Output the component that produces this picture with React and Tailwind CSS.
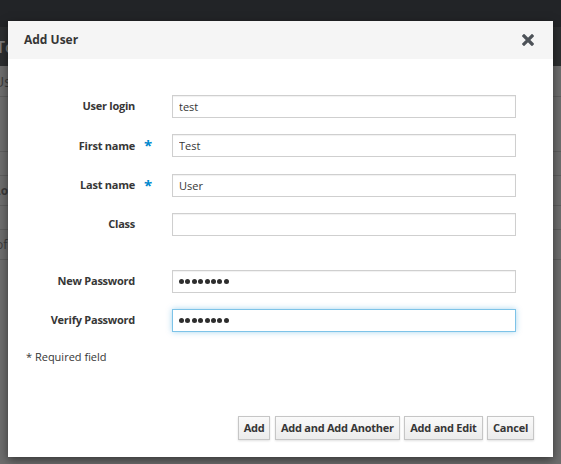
import React from "react";

const font = { fontFamily: '"Open Sans", "Noto Sans", sans-serif' };

function Dots() {
  return (
    <div className="flex gap-[1.4px]">
      {[0, 1, 2, 3, 4, 5, 6, 7].map((i) => (
        <span key={i} className="w-[5px] h-[5px] rounded-full bg-[#2e2e2e]" />
      ))}
    </div>
  );
}

function Field({ label, value, required, password, focused }) {
  const box =
    "w-[344px] h-[23px] px-[6px] text-[11px] text-[#363636] bg-white outline-none border " +
    (focused
      ? "border-[#7dc3e8] shadow-[0_0_6px_rgba(0,136,206,0.35)]"
      : "border-[#cfcfcf] shadow-[inset_0_1px_1px_rgba(0,0,0,0.06)]");
  return (
    <div className="flex items-center h-[23px]">
      <div className="w-[111px] text-right text-[11px] font-bold tracking-[-0.25px] text-[#363636]">{label}</div>
      <div className="w-[37px] pl-[9px] text-[#0088ce] text-[15px] font-bold leading-none">{required ? "*" : ""}</div>
      {password ? (
        <div className={box + " flex items-center"}>
          <Dots />
        </div>
      ) : (
        <input readOnly type="text" value={value} className={box} style={font} />
      )}
    </div>
  );
}

function Btn({ children }) {
  return (
    <button
      className="h-[24px] px-[5px] text-[11px] font-bold tracking-[-0.25px] text-[#363636] border border-[#c6c6c6] bg-gradient-to-b from-[#fafafa] to-[#ececec] shadow-[0_1px_2px_rgba(0,0,0,0.12)]"
      style={font}
    >
      {children}
    </button>
  );
}

export default function App() {
  return (
    <div className="relative w-[561px] h-[464px] overflow-hidden bg-[#6d6d6d]" style={font}>
      {/* dimmed background page */}
      <div className="h-[27px] bg-[#222427]" />
      <div className="h-[39px] bg-[#2c2e30] text-[#7a7a7a] text-[16px] font-semibold flex items-center -ml-[4px]">Tool</div>
      <div className="h-[31px] border-b border-[#5e5e5e] text-[#3a3a3a] text-[14px] flex items-center -ml-[6px]">User</div>
      <div className="h-[55px] border-b border-[#5e5e5e]" />
      <div className="h-[24px] border-b border-[#5e5e5e]" />
      <div className="h-[30px] border-b border-[#5e5e5e] text-[#3a3a3a] text-[12px] font-bold flex items-center -ml-[6px]">Login</div>
      <div className="h-[24px] border-b border-[#5e5e5e]" />
      <div className="h-[30px] border-b border-[#5e5e5e] text-[#3a3a3a] text-[12px] flex items-center -ml-[4px]">of</div>

      {/* modal */}
      <div className="absolute left-[8px] top-[21px] w-[545px] h-[436px] bg-white shadow-[0_3px_9px_rgba(0,0,0,0.5)] flex flex-col">
        <div className="h-[38px] bg-[#f5f5f5] flex items-center justify-between pl-[16px] pr-[19px]">
          <div className="text-[12px] font-bold text-[#363636]">Add User</div>
          <svg width="12" height="12" viewBox="0 0 12 12">
            <path d="M2 2 L10 10 M10 2 L2 10" stroke="#4d5258" strokeWidth="3.2" strokeLinecap="square" />
          </svg>
        </div>
        <div className="flex-1 flex flex-col pl-[16px] pt-[36px]">
          <div className="flex flex-col gap-[16.3px]">
            <Field label="User login" value="test" />
            <Field label="First name" value="Test" required />
            <Field label="Last name" value="User" required />
            <Field label="Class" value="" />
          </div>
          <div className="flex flex-col gap-[16px] mt-[34px]">
            <Field label="New Password" password />
            <Field label="Verify Password" password focused />
          </div>
          <div className="mt-[17px] pl-[2px] text-[11px] text-[#363636]">* Required field</div>
        </div>
        <div className="flex justify-end gap-[4.5px] pr-[19px] pb-[17px]">
          <Btn>Add</Btn>
          <Btn>Add and Add Another</Btn>
          <Btn>Add and Edit</Btn>
          <Btn>Cancel</Btn>
        </div>
      </div>
    </div>
  );
}
